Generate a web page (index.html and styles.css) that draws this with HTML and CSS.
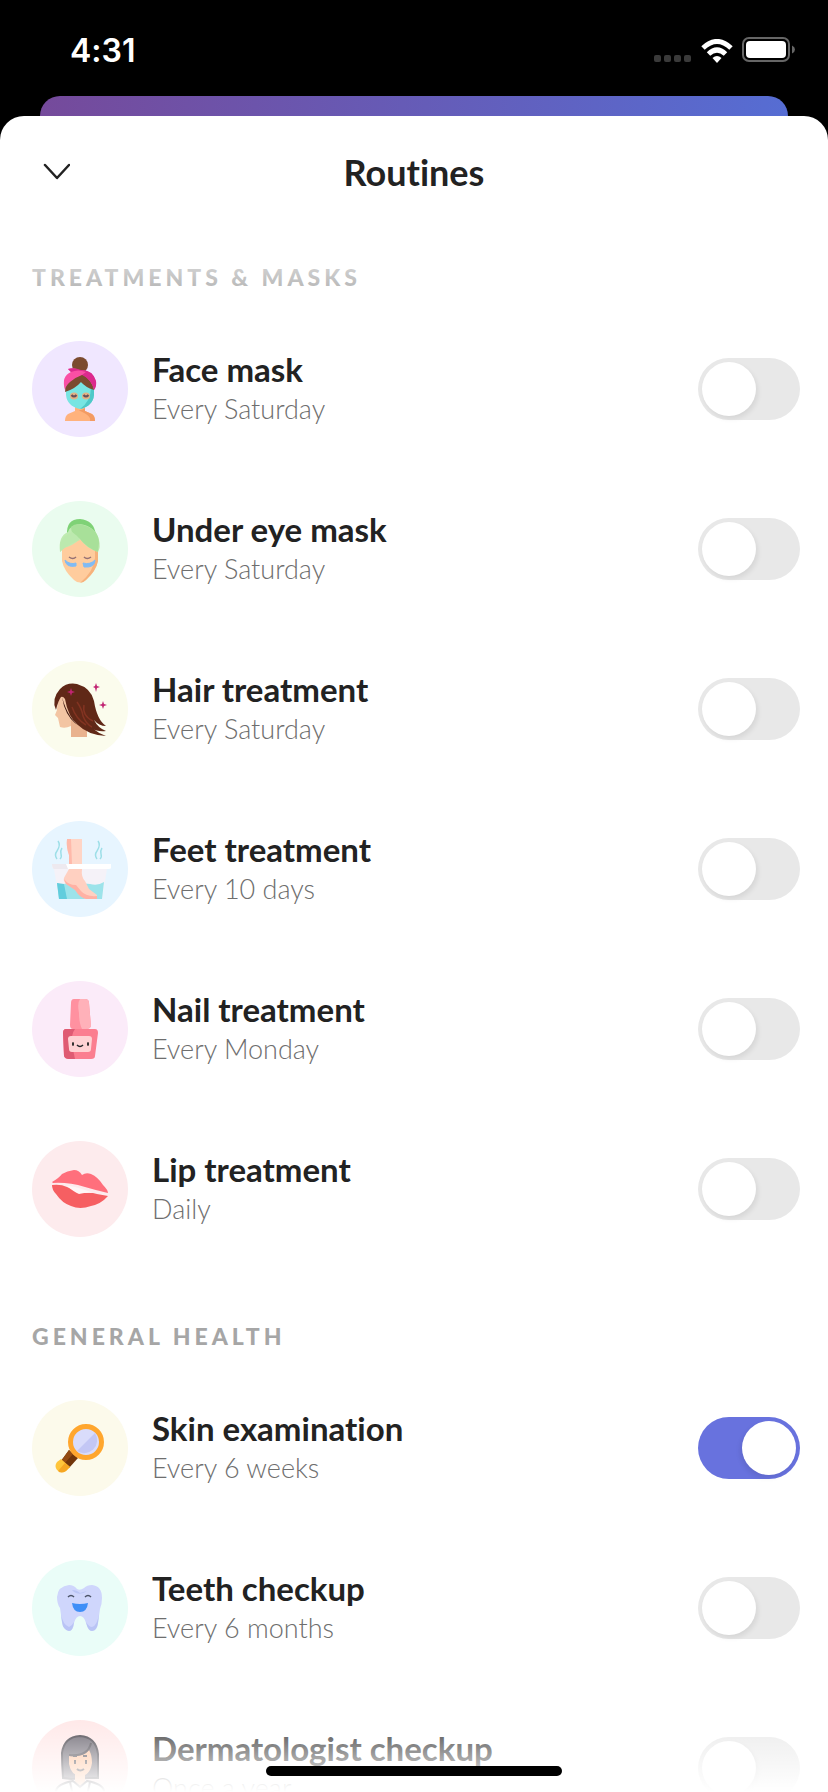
FILE: index.html
```html
<!DOCTYPE html>
<html lang="en">
    <head>
        <meta charset="utf-8">
        <meta name="viewport" content="width=device-width, initial-scale=1">
        <title>Routines</title>
        <link rel="stylesheet" href="styles.css">
    </head>
    <body>
        <div class="status-bar">
            <span class="time">4:31</span>
            <div class="status-icons">
                <svg width="38" height="8" viewBox="0 0 38 8" fill="#3a3a3a">
                    <rect x="0" width="7" height="7" rx="2" />
                    <rect x="10" width="7" height="7" rx="2" />
                    <rect x="20" width="7" height="7" rx="2" />
                    <rect x="30" width="7" height="7" rx="2" />
                </svg>
                <svg class="wifi" width="32" height="24" viewBox="0 0 32 24" fill="none" stroke="#fff" stroke-width="5">
                    <path d="M2 9Q16-4 30 9" />
                    <path d="M7.500 15Q16 7 24.500 15" />
                    <path d="M16 24L11.500 19Q16 15 20.500 19Z" fill="#fff" stroke="none" />
                </svg>
                <svg width="54" height="26" viewBox="0 0 54 26">
                    <rect x="1" y="1" width="46" height="23" rx="6" fill="none" stroke="#666" stroke-width="2" />
                    <rect x="4" y="4" width="40" height="17" rx="4" fill="#fff" />
                    <path d="M50 8.500Q53 10 53 12.500T50 16.500Z" fill="#666" />
                </svg>
            </div>
        </div>
        <div class="backdrop"></div>
        <main class="sheet">
            <header class="header">
                <button class="close" aria-label="Close">
                    <svg width="28" height="18" viewBox="0 0 28 18" fill="none" stroke="#222" stroke-width="2.500" stroke-linecap="round" stroke-linejoin="round">
                        <path d="M3 2L15 15L27 2" />
                    </svg>
                </button>
                <h1 class="title">Routines</h1>
            </header>
            <div class="content">
                <section class="group">
                    <h2 class="group-title">TREATMENTS &amp; MASKS</h2>
                    <ul class="list">
                        <li class="row">
                            <svg class="icon lilac" viewBox="0 0 96 96">
                                <circle cx="48" cy="24" r="8" fill="#7b4b2f" />
                                <path d="M43 66H53V70L60 73Q63 75 63 80H33Q33 75 36 73L43 70Z" fill="#ffb27d" />
                                <path d="M43 68Q48 71 53 67V70L60 73Q63 75 63 80H58Q60 74 43 68Z" fill="#f39b63" />
                                <path d="M33 48Q31 30 48 29Q65 30 62 48Z" fill="#7b4b2f" />
                                <path d="M34 49Q43 46 48 40Q54 45 62 47V54Q61 65 48 68Q35 65 34 54Z" fill="#78e5e2" />
                                <path d="M59 46L62 47V54Q61 65 48 68Q59 60 59 46Z" fill="#4fc8c8" />
                                <path d="M33 49Q29 35 39 31L36 28Q42 26 47 29Q57 28 62 36Q66 42 62 49Q59 38 51 34Q43 37 33 49Z" fill="#fa4fa5" />
                                <path d="M36 28Q42 26 49 29Q61 29 64 40Q65 45 62 49Q60 39 50 34L54 31Q46 28 39 31Z" fill="#dc2a8d" />
                                <path d="M33 51Q33 45 38 41Q44 36 50 34Q59 39 62 49Q53 46 49 41Q43 48 33 51Z" fill="#7b4b2f" />
                                <ellipse cx="42" cy="55" rx="4" ry="3.500" fill="#e3b184" />
                                <ellipse cx="54" cy="55" rx="4" ry="3.500" fill="#e3b184" />
                                <path d="M39.500 54Q42 57 44.500 54M51.500 54Q54 57 56.500 54" stroke="#66505b" stroke-width="2" fill="none" />
                            </svg>
                            <div class="text">
                                <label class="name" for="face">Face mask</label>
                                <p class="when">Every Saturday</p>
                            </div>
                            <input class="toggle" type="checkbox" id="face">
                        </li>
                        <li class="row">
                            <svg class="icon green" viewBox="0 0 96 96">
                                <path d="M35 34Q34 18 48 18Q62 19 64 34Z" fill="#7fd276" />
                                <path d="M30 45L48 38L66 46V60Q64 70 54 79Q48 84 42 79Q32 70 30 60Z" fill="#ffcc9d" />
                                <path d="M63 46L66 48V60Q64 70 54 79Q51 82 48 82Q62 70 63 57Z" fill="#f6b27c" />
                                <path d="M28 51Q26 35 36 31Q38 24 48 23Q63 25 67 39Q69 46 66 51Q54 47 48 38Q41 45 31 47Z" fill="#c0ebb2" />
                                <path d="M39 26Q44 21 51 24Q67 28 67 42L66 51Q55 47 47 37Q39 34 39 26Z" fill="#a8e099" />
                                <path d="M28 51Q36 43 48 39Q45 34 40 31Q31 34 28 43Z" fill="#bce9ae" />
                                <path d="M33 59Q38 64 44 62V65Q34 67 33 59ZM51 62Q58 64 63 59Q63 67 52 66Z" fill="#80bbf4" stroke="#80bbf4" stroke-width="1" />
                                <path d="M37 56Q41 59 44 56M52 56Q55 59 59 56" stroke="#967174" stroke-width="1.500" fill="none" />
                            </svg>
                            <div class="text">
                                <label class="name" for="eye">Under eye mask</label>
                                <p class="when">Every Saturday</p>
                            </div>
                            <input class="toggle" type="checkbox" id="eye">
                        </li>
                        <li class="row">
                            <svg class="icon cream" viewBox="0 0 96 96">
                                <path d="M28 35Q25 43 25 49L23 54L26 57L28 66Q33 68 39 65V76H55V61L40 35Z" fill="#f3c5a3" />
                                <path d="M39 59L55 69V76H39Z" fill="#e9b28e" />
                                <path d="M24 49Q19 38 28 28Q35 21 45 23Q59 27 62 40Q65 59 74 65Q67 65 62 59Q66 67 74 70Q65 71 60 67Q66 72 74 75Q56 74 46 64Q36 56 33 38Q31 35 29 36Q26 40 24 49Z" fill="#602817" />
                                <path d="M30 36Q36 58 49 66Q37 60 32 45Z" fill="#401a13" />
                                <path d="M45 41Q50 48 51 55Q54 63 60 66M40 46Q44 58 54 64M52 44Q50 55 61 60" stroke="#823321" stroke-width="1.500" fill="none" />
                                <path d="M39 27L40 30L43 31L40 32L39 35L38 32L35 31L38 30ZM64 22L65 25L68 26L65 27L64 31L63 27L61 26L63 25ZM71 40L72 43L75 44L72 45L71 48L70 45L67 44L70 43Z" fill="#c12573" />
                            </svg>
                            <div class="text">
                                <label class="name" for="hair">Hair treatment</label>
                                <p class="when">Every Saturday</p>
                            </div>
                            <input class="toggle" type="checkbox" id="hair">
                        </li>
                        <li class="row">
                            <svg class="icon blue" viewBox="0 0 96 96">
                                <path d="M35 18H50V43H37V34Q34 26 35 18Z" fill="#ffd5c6" />
                                <path d="M35 18H39L40 43H37V34Q34 26 35 18Z" fill="#ffb9aa" />
                                <path d="M22 48H75L70 78H27Z" fill="#f5f2f8" />
                                <path d="M25 62Q31 65 36 61L58 63Q66 65 72 61L70 78H27Z" fill="#9ce3ea" />
                                <path d="M25 62L32 63L35 78H27Z" fill="#62cddd" />
                                <path d="M37 48H50Q49 56 53 60L57 68L65 74V78H54Q48 76 44 68L34 63Q30 59 33 55Z" fill="#ffd0c1" />
                                <path d="M32 58Q36 64 44 64L49 70Q54 76 65 75V78H54Q48 77 43 69L34 63Z" fill="#ffb1a4" />
                                <path d="M20 43H79V47Q79 48 75 48H22Q20 48 20 43Z" fill="#fff" />
                                <path d="M20 43H34L36 48H22Q20 48 20 43Z" fill="#ede9ef" />
                                <path d="M26 20Q29 24 25 30Q22 34 25 38M30 27Q28 30 29 33T28 38M66 20Q69 24 65 30Q62 34 65 38M70 27Q68 30 69 33T68 38" fill="none" stroke="#9edfe8" stroke-width="1.500" />
                            </svg>
                            <div class="text">
                                <label class="name" for="feet">Feet treatment</label>
                                <p class="when">Every 10 days</p>
                            </div>
                            <input class="toggle" type="checkbox" id="feet">
                        </li>
                        <li class="row">
                            <svg class="icon pink" viewBox="0 0 96 96">
                                <path d="M42 18H53Q57 18 57 22L59 45Q58 48 54 48H41Q38 48 38 44L39 22Q39 18 42 18Z" fill="#ff91a0" />
                                <path d="M48 18H53Q57 18 57 22L59 45Q58 48 54 48H50Q47 42 47 32Q45 22 48 18Z" fill="#ffb1b9" />
                                <path d="M34 48H63Q66 48 66 52L63 75Q63 78 59 78H37Q33 78 32 75L31 52Q31 48 34 48Z" fill="#fb7e90" />
                                <path d="M34 48H43Q39 53 40 64Q42 73 43 78H37Q33 78 32 75L31 52Q31 48 34 48Z" fill="#df5b73" />
                                <path d="M39 55H57Q60 55 60 58L59 68Q59 71 56 71H40Q37 71 37 68L36 58Q36 55 39 55Z" fill="#ffd2d4" />
                                <path d="M45 64Q48 67 51 64" stroke="#25262a" stroke-width="1.500" fill="none" />
                                <ellipse cx="41" cy="63" rx="1" ry="2" fill="#222" />
                                <ellipse cx="56" cy="63" rx="1" ry="2" fill="#222" />
                            </svg>
                            <div class="text">
                                <label class="name" for="nail">Nail treatment</label>
                                <p class="when">Every Monday</p>
                            </div>
                            <input class="toggle" type="checkbox" id="nail">
                        </li>
                        <li class="row">
                            <svg class="icon rose" viewBox="0 0 96 96">
                                <path d="M20 41Q27 37 30 33Q35 30 42 29Q47 29 50 34Q54 31 59 33Q66 36 71 44Q76 49 76 52Q63 49 53 46Q36 41 21 42Z" fill="#ff6f7c" />
                                <path d="M20 44Q29 43 35 46Q45 51 53 52Q59 51 65 53L76 55Q69 63 59 65Q48 69 39 65Q30 62 24 53Q20 49 20 44Z" fill="#f65f62" />
                                <path d="M35 45Q42 45 53 49L62 52Q55 51 47 53Q42 51 35 45Z" fill="#fff6f6" />
                            </svg>
                            <div class="text">
                                <label class="name" for="lip">Lip treatment</label>
                                <p class="when">Daily</p>
                            </div>
                            <input class="toggle" type="checkbox" id="lip">
                        </li>
                    </ul>
                </section>
                <section class="group">
                    <h2 class="group-title">GENERAL HEALTH</h2>
                    <ul class="list">
                        <li class="row">
                            <svg class="icon sand" viewBox="0 0 96 96">
                                <path d="M37 50L46 58L37 68L29 61Z" fill="#71350a" />
                                <path d="M37 50L41 54L32 64L29 61Z" fill="#934a12" />
                                <path d="M29 59L38 67L34 71Q29 74 25 70Q22 66 25 62Z" fill="#ffc53a" />
                                <path d="M33 63L38 67L34 71Q29 74 26 71Z" fill="#f6a622" />
                                <circle cx="54" cy="42" r="15.500" fill="#d9dcfb" stroke="#ffa62e" stroke-width="5" />
                                <path d="M63 33A13 13 0 0 1 45 51Z" fill="#c3c7f5" />
                            </svg>
                            <div class="text">
                                <label class="name" for="skin">Skin examination</label>
                                <p class="when">Every 6 weeks</p>
                            </div>
                            <input class="toggle" type="checkbox" id="skin" checked>
                        </li>
                        <li class="row">
                            <svg class="icon mint" viewBox="0 0 96 96">
                                <path d="M37 25Q42 25 45 29Q48 31 52 28Q55 25 60 25Q70 26 70 38Q70 44 68 49L66 63Q65 71 60 71Q56 71 54 63Q52 56 48 56Q44 56 42 63Q41 71 37 71Q31 70 30 62L28 48Q25 44 25 37Q26 26 37 25Z" fill="#cfd6fc" />
                                <path d="M29 54Q31 65 37 67Q40 66 42 62Q41 71 37 71Q31 70 30 62ZM67 54Q65 66 60 67Q57 67 54 62Q56 71 60 71Q65 70 66 63ZM40 30Q45 30 48 33L55 31Q48 36 42 32Z" fill="#b9c4f5" />
                                <path d="M36 37Q39 34 42 37M53 37Q56 34 59 37" stroke="#4b5368" stroke-width="1.500" fill="none" />
                                <path d="M40 43Q48 45 56 43Q55 52 48 52Q41 52 40 43Z" fill="#3e8ef7" />
                            </svg>
                            <div class="text">
                                <label class="name" for="teeth">Teeth checkup</label>
                                <p class="when">Every 6 months</p>
                            </div>
                            <input class="toggle" type="checkbox" id="teeth">
                        </li>
                        <li class="row">
                            <svg class="icon blush" viewBox="0 0 96 96" stroke="#2b2730" stroke-width="2">
                                <path d="M31 58Q30 45 30 33Q32 17 48 16Q64 17 66 34V58H58L39 59Z" fill="#56505c" />
                                <path d="M43 52H53V62L48 66L43 62Z" fill="#ffb98c" stroke="none" />
                                <path d="M37 36Q52 37 57 30Q60 35 60 43Q58 56 48 56Q39 55 37 44Z" fill="#ffb98c" stroke="none" />
                                <path d="M37 35Q56 37 59 23" fill="none" />
                                <path d="M41 36H45M51 36H55M43 40V44M54 40V44M45 49Q48 52 52 49" fill="none" />
                                <path d="M24 85V71Q25 64 41 61L48 67L55 61Q71 64 72 71V85Z" fill="#fff" />
                                <path d="M38 62L42 80M58 62L54 80" fill="none" />
                            </svg>
                            <div class="text">
                                <label class="name" for="derma">Dermatologist checkup</label>
                                <p class="when">Once a year</p>
                            </div>
                            <input class="toggle" type="checkbox" id="derma">
                        </li>
                    </ul>
                </section>
            </div>
        </main>
        <div class="home-bar"></div>
    </body>
</html>
```
FILE: styles.css
```css
* {
    margin: 0;
    padding: 0;
    box-sizing: border-box;
}
body {
    height: 100vh;
    display: flex;
    flex-direction: column;
    overflow: hidden;
    background-color: #000;
    color: #222;
    font-family: Lato, "Open Sans", sans-serif;
    font-variant-ligatures: none;
}
.status-bar {
    flex: none;
    height: 96px;
    padding: 4px 32px 0 70px;
    display: flex;
    align-items: center;
    justify-content: space-between;
}
.time {
    color: #fff;
    font-family: Inter, sans-serif;
    font-size: 32px;
    font-weight: 600;
}
.status-icons {
    display: flex;
    align-items: flex-end;
    gap: 9px;
}
.backdrop {
    flex: none;
    height: 20px;
    margin: 0 40px;
    border-radius: 20px 20px 0 0;
    background: linear-gradient(to right, #754a9b, #566dd3);
}
.sheet {
    position: relative;
    flex: 1;
    min-height: 0;
    display: flex;
    flex-direction: column;
    border-radius: 24px 24px 0 0;
    background-color: #fff;
}
.header {
    flex: none;
    height: 112px;
    padding: 0 42px;
    display: grid;
    grid-template-columns: 28px 1fr 28px;
    align-items: center;
}
.close {
    height: 28px;
    border: none;
    background: none;
    cursor: pointer;
}
.close svg {
    display: block;
}
.title {
    text-align: center;
    font-size: 36px;
    line-height: 44px;
}
.content {
    flex: 1;
    overflow-y: auto;
    scrollbar-width: none;
    padding: 35px 28px 64px 32px;
}
/* content fades out under the header and at the bottom edge */
.sheet::before,
.sheet::after {
    content: "";
    position: absolute;
    left: 0;
    right: 0;
    pointer-events: none;
}
.sheet::before {
    top: 112px;
    height: 76px;
    background: linear-gradient(#fff, rgba(255, 255, 255, 0));
}
.sheet::after {
    bottom: 0;
    height: 84px;
    background: linear-gradient(rgba(255, 255, 255, 0), #fff);
}
.group + .group {
    margin-top: 85px;
}
.group-title {
    margin-bottom: 50px;
    color: #a6a6a6;
    font-size: 23px;
    font-weight: 900;
    line-height: 28px;
    letter-spacing: 4px;
}
.list {
    display: flex;
    flex-direction: column;
    gap: 64px;
    list-style: none;
}
.row {
    display: flex;
    align-items: center;
}
.icon {
    flex: none;
    width: 96px;
    height: 96px;
    border-radius: 50%;
}
.lilac {
    background-color: #f0e7ff;
}
.green {
    background-color: #eafcef;
}
.cream {
    background-color: #fbfced;
}
.blue {
    background-color: #e7f5ff;
}
.pink {
    background-color: #fbebf9;
}
.rose {
    background-color: #fdebed;
}
.sand {
    background-color: #fcfaeb;
}
.mint {
    background-color: #eafdf8;
}
.blush {
    background-color: #ffe5e5;
}
.text {
    flex: 1;
    margin-left: 24px;
}
.name {
    display: block;
    font-size: 33px;
    font-weight: 700;
    line-height: 40px;
}
.when {
    color: #6e6e6e;
    font-size: 27px;
    font-weight: 300;
    line-height: 40px;
}
.toggle {
    appearance: none;
    flex: none;
    width: 102px;
    height: 62px;
    padding: 4px;
    border-radius: 31px;
    background-color: #e8e8e8;
    cursor: pointer;
}
.toggle::before {
    content: "";
    display: block;
    width: 54px;
    height: 54px;
    border-radius: 50%;
    background-color: #fff;
    box-shadow: 2px 3px 5px rgba(0, 0, 0, 0.08);
}
.toggle:checked {
    background-color: #6872de;
}
.toggle:checked::before {
    margin-left: auto;
    box-shadow: -2px 3px 5px rgba(0, 0, 0, 0.08);
}
.home-bar {
    position: absolute;
    bottom: 16px;
    left: 50%;
    width: 296px;
    height: 10px;
    margin-left: -148px;
    border-radius: 5px;
    background-color: #000;
}
```
